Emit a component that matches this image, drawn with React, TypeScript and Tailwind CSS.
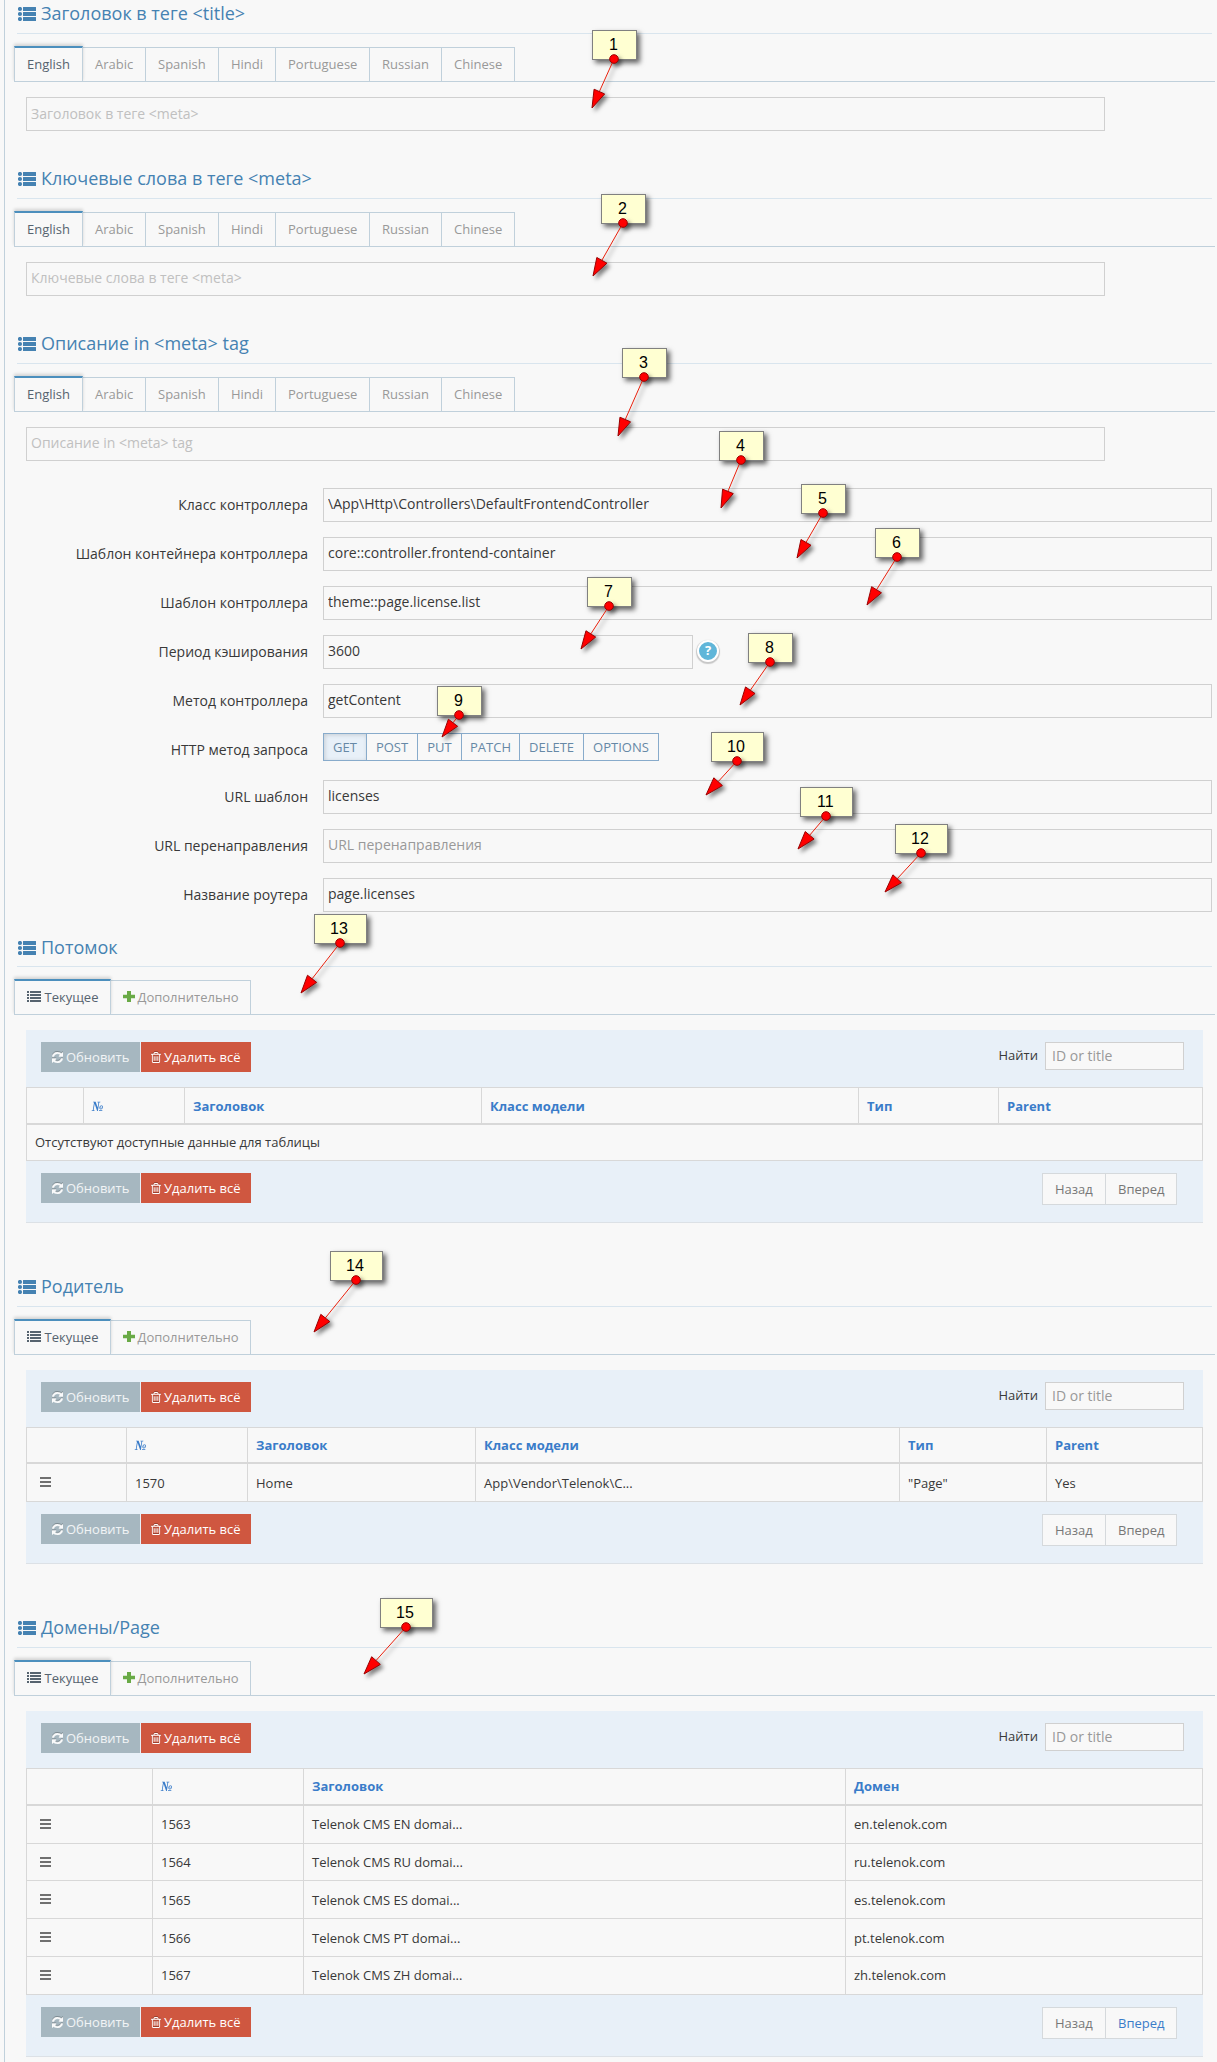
import React from "react";

const languages = [
  { name: "Arabic", width: "w-[63px]" },
  { name: "Spanish", width: "w-[73px]" },
  { name: "Hindi", width: "w-[57px]" },
  { name: "Portuguese", width: "w-[94px]" },
  { name: "Russian", width: "w-[72px]" },
  { name: "Chinese", width: "w-[73px]" },
];

type Callout = { n: number; x: number; y: number; w: number; tip: [number, number] };

const callouts: Callout[] = [
  { n: 1, x: 592, y: 30, w: 45, tip: [592, 108] },
  { n: 2, x: 601, y: 194, w: 45, tip: [593, 276] },
  { n: 3, x: 622, y: 348, w: 45, tip: [618, 436] },
  { n: 4, x: 719, y: 431, w: 45, tip: [721, 508] },
  { n: 5, x: 801, y: 484, w: 45, tip: [797, 558] },
  { n: 6, x: 875, y: 528, w: 45, tip: [867, 605] },
  { n: 7, x: 587, y: 577, w: 45, tip: [581, 649] },
  { n: 8, x: 748, y: 633, w: 45, tip: [740, 705] },
  { n: 9, x: 437, y: 686, w: 45, tip: [442, 737] },
  { n: 10, x: 711, y: 732, w: 53, tip: [706, 795] },
  { n: 11, x: 800, y: 787, w: 53, tip: [798, 849] },
  { n: 12, x: 895, y: 824, w: 53, tip: [885, 892] },
  { n: 13, x: 314, y: 914, w: 53, tip: [301, 993] },
  { n: 14, x: 330, y: 1251, w: 53, tip: [314, 1332] },
  { n: 15, x: 380, y: 1598, w: 53, tip: [364, 1674] },
];

function ListUlIcon() {
  return (
    <svg width="18" height="14" viewBox="0 0 18 14" fill="currentColor" className="shrink-0">
      {[0, 5, 10].map((y) => (
        <g key={y}>
          <circle cx="2" cy={y + 2} r="2.1" />
          <rect x="5" y={y} width="13" height="4" rx="0.3" />
        </g>
      ))}
    </svg>
  );
}

function ListIcon() {
  return (
    <svg width="14" height="11" viewBox="0 0 14 11" fill="currentColor" className="shrink-0">
      {[0, 3, 6, 9].map((y) => (
        <g key={y}>
          <rect x="0" y={y} width="2" height="2" />
          <rect x="3" y={y} width="11" height="2" />
        </g>
      ))}
    </svg>
  );
}

function PlusIcon() {
  return (
    <svg width="12" height="11" viewBox="0 0 12 11" fill="#69aa46" className="shrink-0">
      <path d="M4 0h4v3.7h4v3.6H8V11H4V7.3H0V3.7h4z" />
    </svg>
  );
}

function RefreshIcon() {
  return (
    <svg width="11" height="11" viewBox="128 128 1536 1536" fill="currentColor" stroke="currentColor" strokeWidth="60" className="shrink-0 text-white/95 drop-shadow-[0_-1px_0_rgba(0,0,0,0.25)]">
      <path d="M1639 1056q0 5-1 7-64 268-268 434.5t-478 166.5q-146 0-282.5-55t-243.5-157l-129 129q-19 19-45 19t-45-19-19-45v-448q0-26 19-45t45-19h448q26 0 45 19t19 45-19 45l-137 137q71 66 161 102t187 36q134 0 250-65t186-179q11-17 53-117 8-23 30-23h192q13 0 22.5 9.5t9.5 22.5zm25-800v448q0 26-19 45t-45 19h-448q-26 0-45-19t-19-45 19-45l138-138q-148-137-349-137-134 0-250 65t-186 179q-11 17-53 117-8 23-30 23h-199q-13 0-22.5-9.5t-9.5-22.5v-7q65-268 270-434.5t480-166.5q146 0 284 55.5t245 156.5l130-129q19-19 45-19t45 19 19 45z" />
    </svg>
  );
}

function TrashIcon() {
  return (
    <svg width="10" height="11" viewBox="192 128 1408 1536" fill="currentColor" className="shrink-0 drop-shadow-[0_-1px_0_rgba(0,0,0,0.25)]">
      <path d="M704 736v576q0 14-9 23t-23 9h-64q-14 0-23-9t-9-23v-576q0-14 9-23t23-9h64q14 0 23 9t9 23zm256 0v576q0 14-9 23t-23 9h-64q-14 0-23-9t-9-23v-576q0-14 9-23t23-9h64q14 0 23 9t9 23zm256 0v576q0 14-9 23t-23 9h-64q-14 0-23-9t-9-23v-576q0-14 9-23t23-9h64q14 0 23 9t9 23zm128 724v-948h-896v948q0 22 7 40.5t14.5 27 10.5 8.5h832q3 0 10.5-8.5t14.5-27 7-40.5zm-672-1076h448l-48-117q-7-9-17-11h-317q-10 2-17 11zm928 32v64q0 14-9 23t-23 9h-96v948q0 83-47 143.5t-113 60.5h-832q-66 0-113-58.5t-47-141.5v-952h-96q-14 0-23-9t-9-23v-64q0-14 9-23t23-9h309l70-167q15-37 54-63t79-26h320q40 0 79 26t54 63l70 167h309q14 0 23 9t9 23z" />
    </svg>
  );
}

function MenuIcon() {
  return (
    <svg width="11" height="10" viewBox="0 0 11 10" fill="#707070" className="mt-[5px] ml-[6px]">
      <rect width="11" height="2" />
      <rect y="4" width="11" height="2" />
      <rect y="8" width="11" height="2" />
    </svg>
  );
}

function Heading({ children, low }: { children: React.ReactNode; low?: boolean }) {
  return (
    <h4
      className={
        "ml-3 flex h-[34px] w-[1195px] items-start border-b border-[#d9e5ee] text-[18px] leading-6 text-[#4582b2] " +
        (low ? "pt-[2px]" : "pt-px")
      }
    >
      <span className="mt-[6px] ml-px mr-[5px]">
        <ListUlIcon />
      </span>
      {children}
    </h4>
  );
}

function TabBar({ children }: { children: React.ReactNode }) {
  return (
    <div className="mt-3 ml-[9px] flex h-9 w-[1201px] items-end border-b border-[#c0d0db] text-[13px] leading-5 text-[#999]">
      {children}
    </div>
  );
}

const activeTab =
  "-mb-px flex h-9 border-x border-t-2 border-x-[#c0d0db] border-t-[#4c8fbd] bg-[#f8f8f8] pt-[6px] pl-3 text-[#56636f] shadow-[0_-2px_3px_rgba(0,0,0,0.15)] [clip-path:inset(-5px_-4px_1px_-4px)]";
const idleTab = "flex h-[34px] border-t border-r border-[#c0d0db] pt-[6px]";

function LanguageSection({ title, placeholder, inputPad }: { title: string; placeholder: string; inputPad: string }) {
  return (
    <section>
      <Heading>{title}</Heading>
      <TabBar>
        <button className={activeTab + " w-[69px]"}>English</button>
        {languages.map((l) => (
          <button key={l.name} className={idleTab + " pl-3 " + l.width}>
            {l.name}
          </button>
        ))}
      </TabBar>
      <input
        placeholder={placeholder}
        className={
          "mt-[15px] ml-[21px] block h-[34px] w-[1079px] border border-[#d0d0d0] px-1 text-[14px] placeholder:text-[#c0c0c0] " +
          inputPad
        }
      />
    </section>
  );
}

function Field({ label, children, short }: { label: string; children: React.ReactNode; short?: boolean }) {
  return (
    <div className={short ? "flex h-7" : "flex h-[34px]"}>
      <label className="w-[303px] shrink-0 pt-[7px] text-right text-[14px] leading-5 text-[#393939]">{label}</label>
      <div className="ml-[15px] flex flex-1">{children}</div>
    </div>
  );
}

function TextBox({ value, placeholder, narrow }: { value?: string; placeholder?: string; narrow?: boolean }) {
  return (
    <input
      defaultValue={value}
      placeholder={placeholder}
      className={
        (narrow ? "w-[370px]" : "w-[889px]") +
        " h-[34px] border border-[#d0d0d0] px-1 pb-1 text-[14px] text-[#393939] placeholder:text-[#999]"
      }
    />
  );
}

const methods = [
  { name: "GET", cls: "w-[44px] bg-[#e8f0f8] shadow-[inset_1px_1px_4px_rgba(0,0,0,0.15)]" },
  { name: "POST", cls: "w-[51px]" },
  { name: "PUT", cls: "w-[44px]" },
  { name: "PATCH", cls: "w-[58px]" },
  { name: "DELETE", cls: "w-[64px]" },
  { name: "OPTIONS", cls: "w-[75px]" },
];

function ActionButtons() {
  return (
    <div className="ml-[15px] flex h-[30px] gap-px text-[13px] leading-5 text-white [text-shadow:0_-1px_0_rgba(0,0,0,0.25)]">
      <button className="flex w-[99px] items-center gap-[3px] bg-[#a6b7c0] pl-[11px] text-white/85">
        <RefreshIcon />
        Обновить
      </button>
      <button className="flex w-[110px] items-center gap-[3px] bg-[#cf5740] pl-[10px]">
        <TrashIcon />
        Удалить всё
      </button>
    </div>
  );
}

type TableProps = {
  title: string;
  lowTitle?: boolean;
  template: string;
  headers: string[];
  header: string;
  rows: { row: string; cells: string[] }[];
  empty?: string;
  nextActive?: boolean;
};

function TableSection({ title, lowTitle, template, headers, header, rows, empty, nextActive }: TableProps) {
  return (
    <section>
      <Heading low={lowTitle}>{title}</Heading>
      <TabBar>
        <button className={activeTab + " w-[97px] gap-[3.5px]"}>
          <span className="mt-1">
            <ListIcon />
          </span>
          Текущее
        </button>
        <button className={idleTab + " w-[140px] gap-[3px] pl-[11.5px]"}>
          <span className="mt-1">
            <PlusIcon />
          </span>
          Дополнительно
        </button>
      </TabBar>
      <div className="mt-[15px] ml-[21px] w-[1177px] border-b border-[#dce1e6] bg-[#e8f0f8] text-[13px] leading-5 text-[#393939]">
        <div className="flex h-[57px] items-start justify-between pt-3 pr-[19px]">
          <ActionButtons />
          <label className="flex gap-[7px]">
            <span className="pt-[3px]">Найти</span>
            <input
              placeholder="ID or title"
              className="h-7 w-[139px] border border-[#d0d0d0] bg-[#f8f8f8] px-[6px] pb-px text-[14px] placeholder:text-[#999]"
            />
          </label>
        </div>
        <div className="border border-b-0 border-[#d8d8d8] bg-[#f8f8f8]">
          <div className={"grid border-b-2 border-[#d8d8d8] font-bold text-[#3a7cc9] " + template + " " + header}>
            {headers.map((h, i) => (
              <div key={i} className="border-r border-[#d8d8d8] pt-[inherit] pl-2 last:border-r-0">
                {h === "№" ? (
                  <span className="inline-block origin-left scale-x-90 font-['Liberation_Serif',serif] text-[14px] italic">
                    №
                  </span>
                ) : (
                  h
                )}
              </div>
            ))}
          </div>
          {empty && <div className="h-9 border-b border-[#d8d8d8] pt-[7px] pl-2">{empty}</div>}
          {rows.map((r) => (
            <div key={r.cells[0]} className={"grid border-b border-[#d8d8d8] " + template + " " + r.row}>
              <div className="border-r border-[#d8d8d8] pt-2 pl-[7px]">
                <MenuIcon />
              </div>
              {r.cells.map((c, i) => (
                <div key={i} className="border-r border-[#d8d8d8] pt-[var(--cell-top)] pl-2 last:border-r-0">
                  {c}
                </div>
              ))}
            </div>
          ))}
        </div>
        <div className="flex h-[61px] items-start justify-between pt-3 pr-[26px]">
          <ActionButtons />
          <div className="flex h-8 border border-[#d5d9dc] bg-[#f8f8f8] text-[#777]">
            <button className="flex w-[63px] border-r border-[#d5d9dc] pt-[5px] pl-3">Назад</button>
            <button className={"flex w-[70px] pt-[5px] pl-3" + (nextActive ? " text-[#3a7cc9]" : "")}>Вперед</button>
          </div>
        </div>
      </div>
    </section>
  );
}

function Arrow({ c }: { c: Callout }) {
  const sx = c.x + Math.floor(c.w / 2);
  const sy = c.y + 29;
  const dx = c.tip[0] - sx;
  const dy = c.tip[1] - sy;
  const len = Math.hypot(dx, dy);
  const ux = dx / len;
  const uy = dy / len;
  const bx = c.tip[0] - ux * 18;
  const by = c.tip[1] - uy * 18;
  return (
    <g>
      <line x1={sx} y1={sy} x2={bx} y2={by} stroke="#e8200c" strokeWidth="1" />
      <polygon
        points={`${c.tip[0]},${c.tip[1]} ${bx - uy * 5.8},${by + ux * 5.8} ${bx + uy * 5.8},${by - ux * 5.8}`}
        fill="#f00"
        stroke="#900"
        strokeWidth="1"
        strokeLinejoin="round"
      />
      <circle cx={sx} cy={sy} r="4.3" fill="#f00" stroke="#900" strokeWidth="1" />
    </g>
  );
}

export default function App() {
  return (
    <main className="relative h-[2062px] w-[1217px] overflow-hidden bg-[#f8f8f8] font-['Open_Sans',sans-serif]">
      <div className="ml-1 h-full border-l border-[#c0d0db]">
        <div className="flex flex-col gap-[34px]">
          <LanguageSection title="Заголовок в теге <title>" placeholder="Заголовок в теге <meta>" inputPad="pb-[2px]" />
          <LanguageSection
            title="Ключевые слова в теге <meta>"
            placeholder="Ключевые слова в теге <meta>"
            inputPad="pb-1"
          />
          <LanguageSection title="Описание in <meta> tag" placeholder="Описание in <meta> tag" inputPad="pb-1" />
        </div>

        <form className="mt-[27px] mb-[21px] flex flex-col gap-[15px]">
          <Field label="Класс контроллера">
            <TextBox value="\App\Http\Controllers\DefaultFrontendController" />
          </Field>
          <Field label="Шаблон контейнера контроллера">
            <TextBox value="core::controller.frontend-container" />
          </Field>
          <Field label="Шаблон контроллера">
            <TextBox value="theme::page.license.list" />
          </Field>
          <Field label="Период кэширования">
            <TextBox value="3600" narrow />
            <span className="mt-[5px] ml-1 flex size-[22px] items-center justify-center rounded-full border-2 border-white bg-[#60b6d9] text-[13px] font-bold text-white shadow-[0_1px_1px_1px_rgba(0,0,0,0.2)]">
              ?
            </span>
          </Field>
          <Field label="Метод контроллера">
            <TextBox value="getContent" />
          </Field>
          <div className="mb-1">
            <Field label="HTTP метод запроса" short>
              <div className="flex h-7 text-[13px] leading-5 text-[#6688a6]">
                {methods.map((m) => (
                  <button
                    key={m.name}
                    type="button"
                    className={"flex justify-center border-y border-r border-[#88abcb] pt-[3px] first:border-l " + m.cls}
                  >
                    {m.name}
                  </button>
                ))}
              </div>
            </Field>
          </div>
          <Field label="URL шаблон">
            <TextBox value="licenses" />
          </Field>
          <Field label="URL перенаправления">
            <TextBox placeholder="URL перенаправления" />
          </Field>
          <Field label="Название роутера">
            <TextBox value="page.licenses" />
          </Field>
        </form>

        <div className="flex flex-col gap-[50px]">
          <TableSection
            title="Потомок"
            lowTitle
            template="grid-cols-[57px_101px_297px_377px_140px_1fr]"
            headers={["", "№", "Заголовок", "Класс модели", "Тип", "Parent"]}
            header="h-[37px] [&>div]:pt-2"
            rows={[]}
            empty="Отсутствуют доступные данные для таблицы"
          />
          <TableSection
            title="Родитель"
            template="grid-cols-[100px_121px_228px_424px_147px_1fr]"
            headers={["", "№", "Заголовок", "Класс модели", "Тип", "Parent"]}
            header="h-[36px] [&>div]:pt-[7px]"
            rows={[
              {
                row: "h-[38px] [--cell-top:9px]",
                cells: ["1570", "Home", "App\\Vendor\\Telenok\\C...", "\"Page\"", "Yes"],
              },
            ]}
          />
          <TableSection
            title="Домены/Page"
            template="grid-cols-[126px_151px_542px_1fr]"
            headers={["", "№", "Заголовок", "Домен"]}
            header="h-[37px] [&>div]:pt-[7px]"
            nextActive
            rows={[
              { row: "h-[38px] [--cell-top:8px]", cells: ["1563", "Telenok CMS EN domai...", "en.telenok.com"] },
              { row: "h-[37px] [--cell-top:8px]", cells: ["1564", "Telenok CMS RU domai...", "ru.telenok.com"] },
              { row: "h-[38px] [--cell-top:9px]", cells: ["1565", "Telenok CMS ES domai...", "es.telenok.com"] },
              { row: "h-[38px] [--cell-top:9px]", cells: ["1566", "Telenok CMS PT domai...", "pt.telenok.com"] },
              { row: "h-[38px] [--cell-top:8px]", cells: ["1567", "Telenok CMS ZH domai...", "zh.telenok.com"] },
            ]}
          />
        </div>
      </div>

      {callouts.map((c) => (
        <div
          key={c.n}
          className={
            "absolute h-[30px] border border-[#808080] bg-[#ffffd2] font-['Liberation_Sans',sans-serif] text-[16px] leading-7 text-black shadow-[3px_3px_5px_rgba(0,0,0,0.6)] " +
            (c.n < 10 || c.n === 11 ? "pl-4" : "pl-[15px]")
          }
          style={{ left: c.x, top: c.y, width: c.w }}
        >
          {c.n}
        </div>
      ))}
      <svg
        className="pointer-events-none absolute inset-0 drop-shadow-[3px_3px_2px_rgba(0,0,0,0.5)]"
        width="1217"
        height="2062"
        viewBox="0 0 1217 2062"
      >
        {callouts.map((c) => (
          <Arrow key={c.n} c={c} />
        ))}
      </svg>
    </main>
  );
}
